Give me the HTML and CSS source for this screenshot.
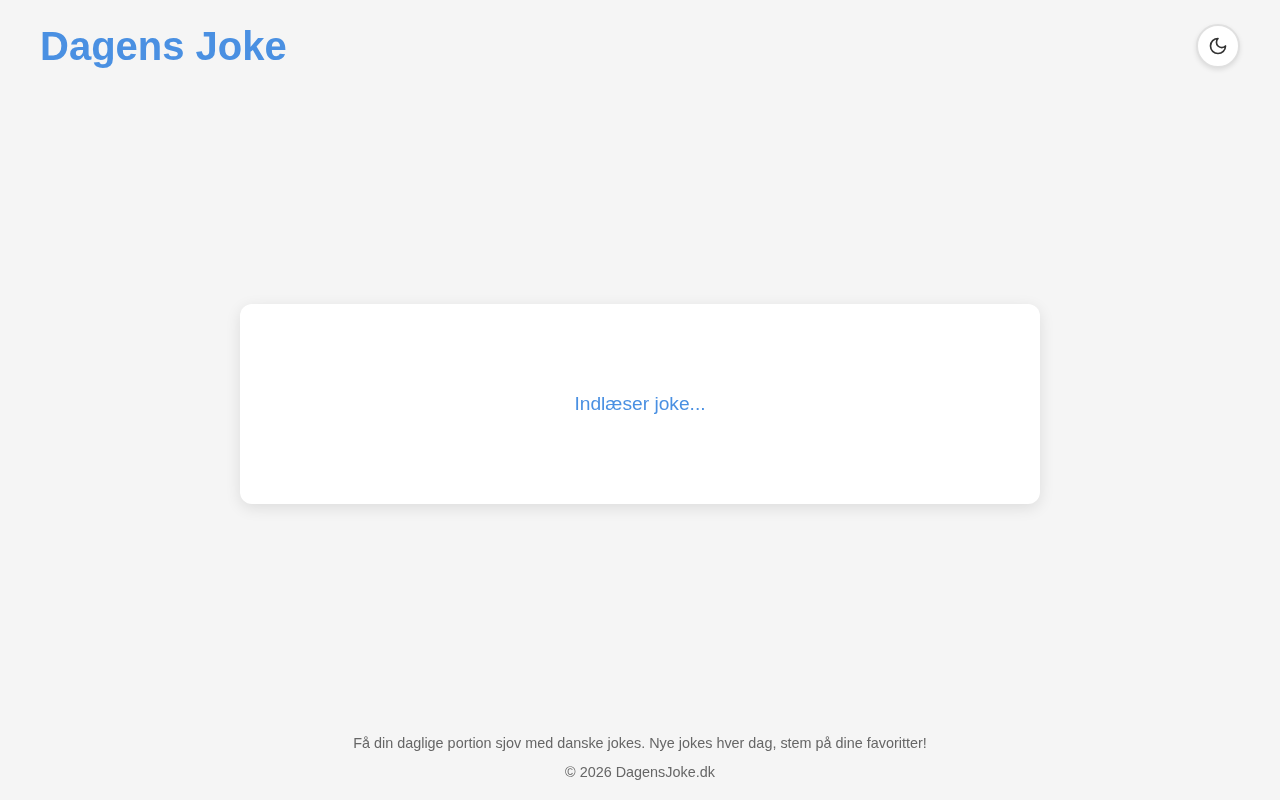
FILE: index.html
```html
<!DOCTYPE html>
<html lang="da">
<head>
<meta charset="utf-8">
<title>Dagens Joke</title>
<link rel="stylesheet" href="styles.css">
</head>
<body>
<div class="app">
  <header class="header">
    <h1 class="logo">Dagens Joke</h1>
    <button class="theme-toggle" aria-label="Skift tema">
      <svg class="theme-icon" xmlns="http://www.w3.org/2000/svg" width="20" height="20" viewBox="0 0 24 24" fill="none" stroke="currentColor" stroke-width="2" stroke-linecap="round" stroke-linejoin="round"><path d="M12 3a6 6 0 0 0 9 9 9 9 0 1 1-9-9Z"/></svg>
    </button>
  </header>
  <main class="main">
    <div class="card">
      <p class="loading">Indlæser joke...</p>
    </div>
  </main>
  <footer class="footer">
    <p class="tagline">Få din daglige portion sjov med danske jokes. Nye jokes hver dag, stem på dine favoritter!</p>
    <p class="copy">© 2026 DagensJoke.dk</p>
  </footer>
</div>
</body>
</html>
```
FILE: styles.css
```css
* { box-sizing: border-box; margin: 0; padding: 0; }
body {
  background: #f5f5f5;
  color: #333;
  font-family: "Liberation Sans", Arial, sans-serif;
}
.app {
  display: flex;
  flex-direction: column;
  height: 800px;
}
.header {
  display: flex;
  justify-content: space-between;
  align-items: center;
  padding: 20px 40px;
}
.logo {
  color: #4a90e2;
  font-size: 40px;
  font-weight: 700;
  line-height: 52px;
  will-change: opacity;
}
.theme-toggle {
  width: 44px;
  height: 44px;
  border-radius: 50%;
  border: 2px solid #e0e0e0;
  background: #fff;
  color: #333;
  display: flex;
  align-items: center;
  justify-content: center;
  box-shadow: 0 2px 5px rgba(0, 0, 0, 0.1);
}
.main {
  flex: 1;
  display: flex;
  align-items: center;
  justify-content: center;
}
.card {
  width: 800px;
  height: 200px;
  background: #fff;
  border-radius: 12px;
  box-shadow: 0 4px 15px rgba(0, 0, 0, 0.1);
  display: flex;
  align-items: center;
  justify-content: center;
}
.loading {
  color: #4a90e2;
  font-size: 19.2px;
  will-change: opacity;
}
.footer {
  padding: 19px 20px;
  text-align: center;
  color: #666;
  font-size: 14.4px;
  line-height: 17px;
}
.tagline, .copy { will-change: opacity; }
.tagline { margin-bottom: 12px; }
```
